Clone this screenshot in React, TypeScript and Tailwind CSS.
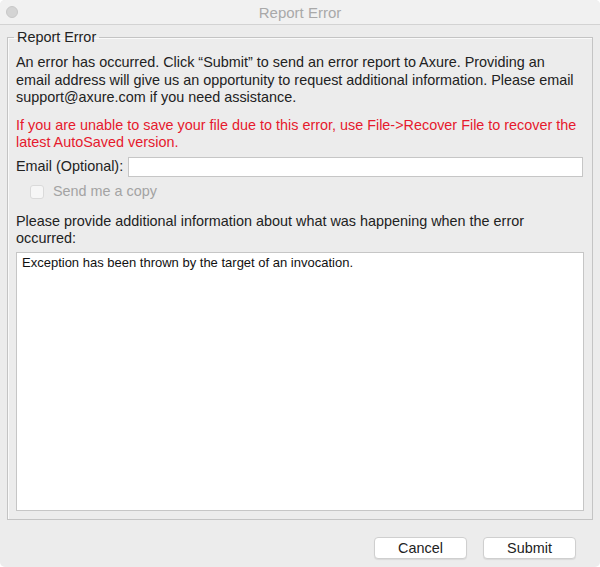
export default function App() {
  return (
    <div className="w-[600px] h-[567px] bg-white" style={{ fontFamily: '"Liberation Sans", Arial, sans-serif' }}>
      <div className="w-[600px] h-[567px] rounded-[5px] bg-[#ececec] flex flex-col overflow-hidden">
        <div className="h-[25px] shrink-0 bg-[#f1f1f1] border-b border-[#d3d3d3] relative flex items-center justify-center">
          <div className="absolute left-[6px] top-[6px] w-[12px] h-[12px] rounded-full bg-[#d4d4d4] border border-[#c8c8c8]" />
          <span className="text-[15px] text-[#a9a9a9] leading-none">Report Error</span>
        </div>
        <fieldset className="mx-[7px] mt-[5px] h-[490px] border border-[#c4c4c4] shadow-[inset_1px_1px_0_#fafafa] px-[8px] pb-[8px] min-w-0">
          <legend className="px-[3px] -ml-[2px] text-[14.4px] text-[#222] leading-[14px]">Report Error</legend>
          <p className="mt-[10px] text-[14.4px] leading-[17.5px] text-[#222] whitespace-nowrap">
            An error has occurred. Click “Submit” to send an error report to Axure. Providing an
            <br />
            email address will give us an opportunity to request additional information. Please email
            <br />
            support@axure.com if you need assistance.
          </p>
          <p className="mt-[10px] text-[14.4px] leading-[17.5px] text-[#e6192d] whitespace-nowrap">
            If you are unable to save your file due to this error, use File-&gt;Recover File to recover the
            <br />
            latest AutoSaved version.
          </p>
          <div className="mt-[5px] flex items-center h-[20px]">
            <span className="text-[14.4px] text-[#222] w-[112px]">Email (Optional):</span>
            <div className="flex-1 h-[20px] bg-white border border-[#c6c6c6] mr-[1px]" />
          </div>
          <div className="mt-[8px] flex items-center h-[14px] pl-[14px]">
            <div className="w-[14px] h-[14px] rounded-[3px] bg-[#f6f6f6] border border-[#dadada]" />
            <span className="ml-[9px] text-[14.4px] text-[#a3a3a3]">Send me a copy</span>
          </div>
          <p className="mt-[14px] text-[14.4px] leading-[17.5px] text-[#222]">
            Please provide additional information about what was happening when the error
            <br />
            occurred:
          </p>
          <div className="mt-[4px] h-[259px] bg-white border border-[#c6c6c6] px-[5px] pt-[2px] text-[13px] leading-[16px] text-[#111]">
            Exception has been thrown by the target of an invocation.
          </div>
        </fieldset>
        <div className="flex justify-end gap-[16px] pr-[24px] mt-[17px]">
          <button className="w-[93px] h-[22px] bg-white rounded-[4px] border border-[#cfcfcf] shadow-[0_1px_1px_rgba(0,0,0,0.08)] text-[14.4px] text-[#222] leading-none">Cancel</button>
          <button className="w-[93px] h-[22px] bg-white rounded-[4px] border border-[#cfcfcf] shadow-[0_1px_1px_rgba(0,0,0,0.08)] text-[14.4px] text-[#222] leading-none">Submit</button>
        </div>
      </div>
    </div>
  );
}
